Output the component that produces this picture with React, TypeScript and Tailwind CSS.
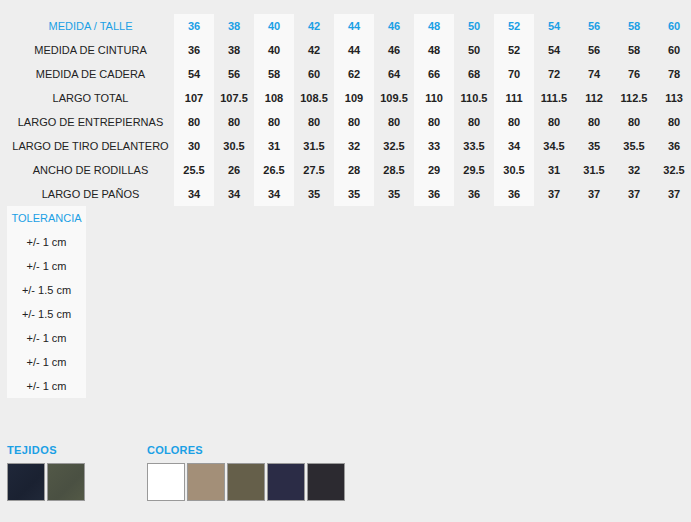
const sizes = ['36', '38', '40', '42', '44', '46', '48', '50', '52', '54', '56', '58', '60'];

const rows: { label: string; values: string[] }[] = [
  { label: 'MEDIDA DE CINTURA', values: ['36', '38', '40', '42', '44', '46', '48', '50', '52', '54', '56', '58', '60'] },
  { label: 'MEDIDA DE CADERA', values: ['54', '56', '58', '60', '62', '64', '66', '68', '70', '72', '74', '76', '78'] },
  { label: 'LARGO TOTAL', values: ['107', '107.5', '108', '108.5', '109', '109.5', '110', '110.5', '111', '111.5', '112', '112.5', '113'] },
  { label: 'LARGO DE ENTREPIERNAS', values: ['80', '80', '80', '80', '80', '80', '80', '80', '80', '80', '80', '80', '80'] },
  { label: 'LARGO DE TIRO DELANTERO', values: ['30', '30.5', '31', '31.5', '32', '32.5', '33', '33.5', '34', '34.5', '35', '35.5', '36'] },
  { label: 'ANCHO DE RODILLAS', values: ['25.5', '26', '26.5', '27.5', '28', '28.5', '29', '29.5', '30.5', '31', '31.5', '32', '32.5'] },
  { label: 'LARGO DE PAÑOS', values: ['34', '34', '34', '35', '35', '35', '36', '36', '36', '37', '37', '37', '37'] },
];

const tolerances = ['+/- 1 cm', '+/- 1 cm', '+/- 1.5 cm', '+/- 1.5 cm', '+/- 1 cm', '+/- 1 cm', '+/- 1 cm'];

const fabrics = ['bg-[linear-gradient(135deg,#1f2739,#1a2131_60%,#202838)]', 'bg-[linear-gradient(135deg,#525847,#4a5042_60%,#535946)]'];
const colors = ['bg-white', 'bg-[#a38f78]', 'bg-[#655f4a]', 'bg-[#2b2c46]', 'bg-[#2c2a30]'];

// every other column up to 52 gets the light stripe
const striped = (i: number) => i % 2 === 0 && i <= 8;

export default function App() {
  return (
    <div className="min-h-[522px] w-[691px] overflow-hidden bg-[#eeeeee] pl-[7px] pt-[14px] font-['Liberation_Sans',Arial,sans-serif] text-[11px] text-[#222]">
      <table className="w-[687px] min-w-[687px] table-fixed border-collapse">
        <colgroup>
          <col className="w-[167px]" />
          {sizes.map((s) => (
            <col key={s} className="w-[40px]" />
          ))}
        </colgroup>
        <tbody>
          <tr className="h-[24px]">
            <td className="p-0 text-center text-[#1ba0e5]">MEDIDA / TALLE</td>
            {sizes.map((s, i) => (
              <td key={s} className={`p-0 text-center font-bold text-[#1ba0e5] ${striped(i) ? 'bg-[#f9f9f9]' : ''}`}>
                {s}
              </td>
            ))}
          </tr>
          {rows.map((r) => (
            <tr key={r.label} className="h-[24px]">
              <td className="p-0 text-center whitespace-nowrap">{r.label}</td>
              {r.values.map((v, i) => (
                <td key={i} className={`p-0 text-center font-bold ${striped(i) ? 'bg-[#f9f9f9]' : ''}`}>
                  {v}
                </td>
              ))}
            </tr>
          ))}
        </tbody>
      </table>

      <div className="flex w-[79px] flex-col bg-[#f9f9f9]">
        <div className="flex h-[24px] items-center justify-center text-[#1ba0e5]">TOLERANCIA</div>
        {tolerances.map((t, i) => (
          <div key={i} className="flex h-[24px] items-center justify-center">
            {t}
          </div>
        ))}
      </div>

      <div className="mt-[44px] flex">
        <div className="w-[140px]">
          <div className="mb-[4px] font-bold tracking-[0.4px] text-[#1ba0e5]">TEJIDOS</div>
          <div className="flex gap-[2px]">
            {fabrics.map((f, i) => (
              <div key={i} className={`h-[38px] w-[38px] border border-[#999] ${f}`} />
            ))}
          </div>
        </div>
        <div>
          <div className="mb-[4px] font-bold tracking-[0.2px] text-[#1ba0e5]">COLORES</div>
          <div className="flex gap-[2px]">
            {colors.map((c, i) => (
              <div key={i} className={`h-[38px] w-[38px] border border-[#999] ${c}`} />
            ))}
          </div>
        </div>
      </div>
    </div>
  );
}
